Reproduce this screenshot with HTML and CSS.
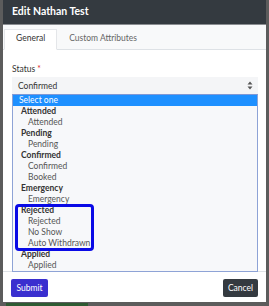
FILE: index.html
```html
<!DOCTYPE html>
<html lang="en">
<head>
  <meta charset="UTF-8">
  <title>Edit Nathan Test</title>
  <link rel="stylesheet" href="styles.css">
</head>
<body>
  <div class="modal">
    <div class="modal-header">Edit Nathan Test</div>

    <div class="tabs">
      <div class="tab active">General</div>
      <div class="tab">Custom Attributes</div>
    </div>

    <div class="modal-body">
      <label class="label">Status <span class="req">*</span></label>
      <div class="select-wrap">
        <div class="select">
          <span>Confirmed</span>
          <svg class="arrows" width="6" height="9" viewBox="0 0 6 9">
            <path d="M3 0.5 L5.5 3.5 H0.5 Z M3 8.5 L5.5 5.5 H0.5 Z" fill="#555"/>
          </svg>
        </div>

        <ul class="listbox">
          <li class="opt selected">Select one</li>
          <li class="grp">Attended</li>
          <li class="opt">Attended</li>
          <li class="grp">Pending</li>
          <li class="opt">Pending</li>
          <li class="grp">Confirmed</li>
          <li class="opt">Confirmed</li>
          <li class="opt">Booked</li>
          <li class="grp">Emergency</li>
          <li class="opt">Emergency</li>
          <li class="grp">Rejected</li>
          <li class="opt">Rejected</li>
          <li class="opt">No Show</li>
          <li class="opt">Auto Withdrawn</li>
          <li class="grp">Applied</li>
          <li class="opt">Applied</li>
        </ul>
        <div class="highlight"></div>
      </div>
    </div>

    <div class="modal-footer">
      <button class="btn btn-submit">Submit</button>
      <button class="btn btn-cancel">Cancel</button>
    </div>
  </div>
  <div class="page-strip"></div>
</body>
</html>
```

FILE: styles.css
```css
body {
  margin: 0;
  background: #5c5c5c;
  font-family: Lato, "Open Sans", Arial, sans-serif;
  font-size: 8.5px;
  color: #333;
  overflow: hidden;
}
.modal {
  margin-left: 3px;
  width: 263px;
  height: 302px;
  background: #fff;
  display: flex;
  flex-direction: column;
}
.modal-header {
  height: 24px;
  flex: none;
  background: #343a40;
  color: #fff;
  font-weight: bold;
  font-size: 10.5px;
  line-height: 22px;
  padding-left: 9px;
  border-bottom: 1px solid #8a8d91;
}
.tabs {
  height: 24px;
  flex: none;
  background: #f8f9fa;
  border-bottom: 1px solid #dee2e6;
  display: flex;
  align-items: flex-end;
  padding-left: 1px;
}
.tab {
  height: 19px;
  line-height: 17px;
  padding: 0 11px;
  color: #666;
  margin-bottom: -1px;
  border: 1px solid transparent;
}
.tab.active {
  background: #fff;
  border-color: #e4e6e9 #e4e6e9 #fff;
  color: #333;
}
.modal-body {
  flex: 1;
  padding: 13px 8px 0 9px;
}
.label {
  display: block;
  line-height: 12px;
  margin-bottom: 2px;
}
.req {
  color: #e02b2b;
}
.select-wrap {
  position: relative;
}
.select {
  height: 17px;
  background: #f4f5f7;
  display: flex;
  align-items: center;
  justify-content: space-between;
  padding: 0 5px 0 6px;
}
.listbox {
  position: absolute;
  top: 17px;
  left: 0;
  right: 0;
  margin: 0;
  padding: 0;
  list-style: none;
  background: #f7f8fa;
  border: 1px solid #8ea3d6;
  border-top-color: #7f98d6;
  z-index: 2;
}
.listbox li {
  height: 11px;
  line-height: 11px;
}
.opt {
  padding-left: 15px;
  color: #555;
}
.grp {
  padding-left: 8px;
  font-weight: bold;
  color: #333;
}
.opt.selected {
  background: #1e90ff;
  color: #fff;
  padding-left: 6px;
}
.highlight {
  position: absolute;
  top: 127px;
  left: 3px;
  width: 73px;
  height: 41px;
  border: 3px solid #0a0ae6;
  border-radius: 4px;
  z-index: 3;
}
.modal-footer {
  height: 31px;
  flex: none;
  border-top: 1px solid #dee2e6;
  display: flex;
  justify-content: space-between;
  align-items: flex-start;
  padding: 7px 8px 0 8px;
  box-sizing: border-box;
}
.btn {
  height: 18px;
  border: 0;
  border-radius: 2px;
  color: #fff;
  font-family: Lato, "Open Sans", Arial, sans-serif;
  font-size: 8.5px;
  padding: 0;
}
.btn-submit {
  background: #3a2fcf;
  width: 37px;
}
.btn-cancel {
  background: #343a40;
  width: 35px;
}
.page-strip {
  margin: 1px 0 0 6px;
  width: 82px;
  height: 3px;
  background: #2e5a32;
}
```
